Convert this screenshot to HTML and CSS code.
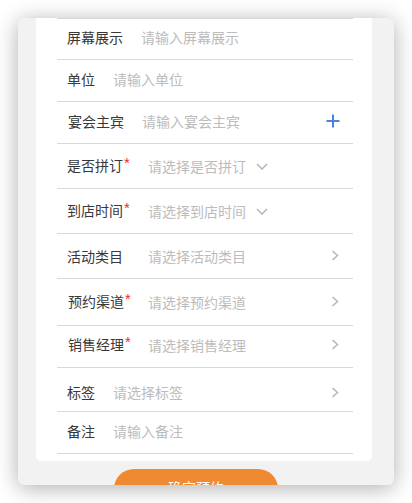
FILE: index.html
```html
<!DOCTYPE html>
<html lang="zh">
<head>
<meta charset="utf-8">
<link rel="stylesheet" href="styles.css">
</head>
<body>
<div class="dialog">
  <div class="card">
    <div class="list">
      <div class="row h40">
        <span class="label">屏幕展示</span><span class="ph">请输入屏幕展示</span>
      </div>
      <div class="row h41">
        <span class="label">单位</span><span class="ph">请输入单位</span>
      </div>
      <div class="row h41 shift1">
        <span class="label">宴会主宾</span><span class="ph">请输入宴会主宾</span>
        <svg class="plus" width="14" height="14" viewBox="0 0 14 14"><path d="M7 0.5V13.5M0.5 7H13.5" stroke="#4a84e0" stroke-width="2" fill="none"/></svg>
      </div>
      <div class="row h44 low2">
        <span class="label wide">是否拼订<span class="req">*</span></span><span class="ph">请选择是否拼订</span>
        <svg class="down" width="12" height="7" viewBox="0 0 12 7"><path d="M1 1L6 6L11 1" stroke="#b8b8b8" stroke-width="1.6" fill="none"/></svg>
      </div>
      <div class="row h44 low2">
        <span class="label wide">到店时间<span class="req">*</span></span><span class="ph">请选择到店时间</span>
        <svg class="down" width="12" height="7" viewBox="0 0 12 7"><path d="M1 1L6 6L11 1" stroke="#b8b8b8" stroke-width="1.6" fill="none"/></svg>
      </div>
      <div class="row h44 low2">
        <span class="label wide">活动类目</span><span class="ph">请选择活动类目</span>
        <svg class="right" width="8" height="11" viewBox="0 0 8 11"><path d="M1.5 1L6.5 5.5L1.5 10" stroke="#b8b8b8" stroke-width="1.6" fill="none"/></svg>
      </div>
      <div class="row h46 low2 shift1">
        <span class="label wide">预约渠道<span class="req">*</span></span><span class="ph">请选择预约渠道</span>
        <svg class="right" width="8" height="11" viewBox="0 0 8 11"><path d="M1.5 1L6.5 5.5L1.5 10" stroke="#b8b8b8" stroke-width="1.6" fill="none"/></svg>
      </div>
      <div class="row h41 shift1">
        <span class="label wide">销售经理<span class="req">*</span></span><span class="ph">请选择销售经理</span>
        <svg class="right" width="8" height="11" viewBox="0 0 8 11"><path d="M1.5 1L6.5 5.5L1.5 10" stroke="#b8b8b8" stroke-width="1.6" fill="none"/></svg>
      </div>
      <div class="row h43 low5">
        <span class="label">标签</span><span class="ph">请选择标签</span>
        <svg class="right" width="8" height="11" viewBox="0 0 8 11"><path d="M1.5 1L6.5 5.5L1.5 10" stroke="#b8b8b8" stroke-width="1.6" fill="none"/></svg>
      </div>
      <div class="row h41">
        <span class="label">备注</span><span class="ph">请输入备注</span>
      </div>
    </div>
  </div>
  <div class="actions">
    <button class="submit">确定预约</button>
  </div>
</div>
</body>
</html>
```
FILE: styles.css
```css
html, body {
  margin: 0;
  padding: 0;
  background: #ffffff;
}
body {
  font-family: "Noto Sans CJK SC", "Noto Sans", sans-serif;
  width: 412px;
  height: 503px;
  overflow: hidden;
}
.dialog {
  margin: 18px 0 0 18px;
  width: 376px;
  height: 467px;
  background: #f2f2f2;
  border-radius: 6px;
  overflow: hidden;
  box-shadow: 0 3px 22px rgba(0, 0, 0, 0.32);
}
.card {
  margin: 0 22px 0 18px;
  background: #ffffff;
  border-radius: 0 0 5px 5px;
  padding: 0 19px 7px 21px;
}
.list {
  border-top: 1px solid #d9d9d9;
}
.row {
  display: flex;
  align-items: center;
  border-bottom: 1px solid #d9d9d9;
  padding: 0 13px 4px 10px;
  font-size: 14px;
  line-height: 20px;
}
.h40 { height: 36px; }
.h41 { height: 37px; }
.h44.low2 { height: 37px; padding-top: 3px; }
.h46.low2 { height: 39px; padding-top: 3px; }
.h43.low5 { height: 30px; padding-top: 9px; }
.shift1 { padding-left: 11px; }
.label {
  color: #383838;
  margin-right: 18px;
  white-space: nowrap;
}
.label.wide {
  width: 81px;
  margin-right: 0;
  flex: none;
}
.shift1 .label.wide { width: 80px; }
.req {
  color: #f02b2b;
  font-family: "Liberation Sans", sans-serif;
  font-size: 15px;
  position: relative;
  top: -3px;
  margin-left: 1px;
}
.ph {
  color: #bcbcbc;
  white-space: nowrap;
}
.down {
  margin-left: 10px;
  margin-top: 1px;
}
.plus {
  margin-left: auto;
}
.right {
  margin-left: auto;
  margin-right: 1px;
}
.actions {
  padding: 8px 0 0 96px;
}
.submit {
  width: 164px;
  height: 40px;
  border: none;
  border-radius: 20px;
  background: #ef8a33;
  color: #ffffff;
  font-family: "Noto Sans CJK SC", sans-serif;
  font-size: 14px;
  line-height: 20px;
  padding: 0 0 5px 0;
  display: block;
}
```
